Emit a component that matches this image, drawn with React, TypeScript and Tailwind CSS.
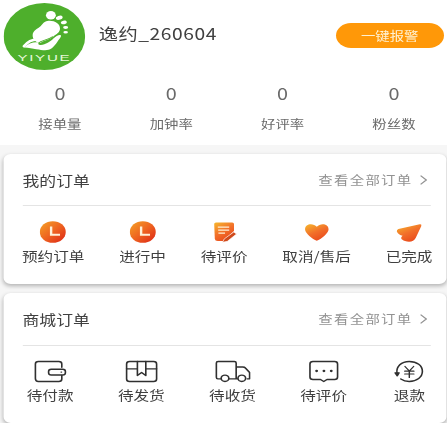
import type { ReactNode } from "react";

type Item = { label: string; icon: ReactNode };

const stats = ["接单量", "加钟率", "好评率", "粉丝数"];

function Gradients() {
  return (
    <svg className="absolute h-0 w-0" aria-hidden="true">
      <defs>
        <linearGradient id="warm" x1="0" y1="0" x2="1" y2="1">
          <stop offset="0" stopColor="#f5a326" />
          <stop offset="0.5" stopColor="#ee6420" />
          <stop offset="1" stopColor="#dc2416" />
        </linearGradient>
        <linearGradient id="soft" x1="0.1" y1="0" x2="0.7" y2="1">
          <stop offset="0" stopColor="#f6b22c" />
          <stop offset="0.5" stopColor="#f2702a" />
          <stop offset="1" stopColor="#e9481b" />
        </linearGradient>
      </defs>
    </svg>
  );
}

function Logo() {
  return (
    <svg viewBox="0 0 68 67" className="h-[67px] w-[68px] shrink-0">
      <ellipse cx="34" cy="33.5" rx="34" ry="33.5" fill="#4eaf2c" />
      <g fill="#fff">
        <ellipse cx="39.4" cy="12.2" rx="4.100" ry="4.300" />
        <ellipse cx="46.4" cy="14.8" rx="2.900" ry="2" transform="rotate(-25 46.4 14.8)" />
        <ellipse cx="50.200" cy="19.400" rx="2.500" ry="1.800" transform="rotate(-15 50.2 19.4)" />
        <ellipse cx="51.700" cy="24.500" rx="2.100" ry="1.400" />
        <ellipse cx="51.700" cy="29.300" rx="1.900" ry="1.200" />
        <path d="M36.500 18C42 17 47 20.500 47 25.500C47 29.500 44 31 41.500 33.500C38.500 36.500 33.500 37.500 30.500 40C27 39.500 24 36.500 24.200 32C24.500 27 28.500 26 31 23C33 20.500 33.500 18.500 36.500 18Z" />
        <path d="M17 43.200C20.500 38 24 36.500 28 36.500" fill="none" stroke="#fff" strokeWidth="2.400" strokeLinecap="round" />
        <path d="M17 44.500C21 40 25 38.800 29.500 39.500C28.500 41.200 29 42.200 31 42C35 41.700 39 38.500 41.500 35.500C43.500 33.300 46.500 31.300 47.600 32.300C48.500 33.300 46.800 35.500 45.500 37.500C43 42 41 45.500 37.500 46.800C33 48.300 27 45.500 17 44.500Z" />
      </g>
      <path d="M29 40.200C31.500 37.200 37 37.200 41 33.500" fill="none" stroke="#4eaf2c" strokeWidth="0.900" />
      <text x="11.500" y="57.600" textLength="45" lengthAdjust="spacingAndGlyphs" fill="#e5f8d8" className="font-['Liberation_Sans',sans-serif] text-[8.800px] tracking-[1px]">YIYUE</text>
    </svg>
  );
}

function ClockIcon() {
  return (
    <svg viewBox="0 0 22 22" className="h-[22px] w-[22px]">
      <circle cx="11" cy="11" r="10.800" fill="url(#warm)" />
      <path d="M9.600 5.500v8.200h7.400" fill="none" stroke="#fff0d8" strokeWidth="2" />
    </svg>
  );
}

function NoteIcon() {
  return (
    <svg viewBox="0 0 22 22" className="h-[22px] w-[22px]">
      <path d="M4 1.500h13.500q1.500 0 1.500 1.500v7L10.500 20H5.500Q3.200 20 3 17.500L2.500 3q0-1.500 1.500-1.500Z" fill="url(#soft)" />
      <path d="M5.500 6.200h9.500M5.800 9.200h9.200M6 12.200h5.500" stroke="#fff0d5" strokeWidth="1.200" />
      <path d="M18.800 11l2.300 2L13.500 20.300l-4 1 1.300-3.300Z" fill="#cf4a1c" stroke="#fff" strokeWidth="0.600" />
    </svg>
  );
}

function HeartIcon() {
  return (
    <svg viewBox="0 0 22 22" className="h-[22px] w-[22px]">
      <path d="M11 19.800C7.500 18 1.200 12.500 1.200 8.200C1.200 2.500 8 1.500 11 5.800C14 1.500 20.800 2.500 20.800 8.200C20.800 12.500 14.500 18 11 19.800Z" fill="url(#soft)" />
    </svg>
  );
}

function PlaneIcon() {
  return (
    <svg viewBox="0 0 22 22" className="h-[22px] w-[22px]">
      <path d="M2 8L19.800 3.300Q21.800 3 21 5.200L16.500 16.800C15 20.500 11.500 21.500 7.500 20C4 18.500 3.500 16.800 5.500 14.800C3.500 14.300 1.300 12.800 .7 10.500Q.5 8.500 2 8Z" fill="url(#soft)" />
    </svg>
  );
}

function LineIcon({ children }: { children: ReactNode }) {
  return (
    <svg viewBox="0 0 30 24" className="h-[24px] w-[30px]" fill="none" stroke="#303030" strokeWidth="1.350" strokeLinecap="round" strokeLinejoin="round">
      {children}
    </svg>
  );
}

const bookings: Item[] = [
  { label: "预约订单", icon: <ClockIcon /> },
  { label: "进行中", icon: <ClockIcon /> },
  { label: "待评价", icon: <NoteIcon /> },
  { label: "取消/售后", icon: <HeartIcon /> },
  { label: "已完成", icon: <PlaneIcon /> },
];

const mall: Item[] = [
  {
    label: "待付款",
    icon: (
      <LineIcon>
        <path d="M24.500 8.300V5q0-2.500-2.500-2.500H5Q2.500 2.500 2.500 5v14.500q0 3 2.500 3h17q2.500 0 2.500-2.500v-3.500" />
        <rect x="13.500" y="10.200" width="14" height="5.800" rx="2.200" />
        <path d="M24 13.100h.2" />
      </LineIcon>
    ),
  },
  {
    label: "待发货",
    icon: (
      <LineIcon>
        <rect x="2.500" y="2.500" width="25" height="20" rx="2.500" />
        <path d="M2.500 9.800h9M18.500 9.800h9M11.500 2.500v14l3.500-3 3.500 3v-14" />
      </LineIcon>
    ),
  },
  {
    label: "待收货",
    icon: (
      <LineIcon>
        <path d="M5 19.800H2.500q-1.200 0-1.200-1.500V4q0-1.500 1.500-1.500h13.500q1.500 0 1.500 1.500v15.800H12M17.800 8h5.500q1.500 0 2.200 1l3.500 4.500v6.300h-2M17.800 19.800h1" />
        <circle cx="8.500" cy="19.300" r="3.200" />
        <circle cx="22.500" cy="19.300" r="3.200" />
      </LineIcon>
    ),
  },
  {
    label: "待评价",
    icon: (
      <LineIcon>
        <path d="M5.800 2.500h18q2.500 0 2.500 2.500v13q0 2.500-2.500 2.500h-6.300l-2.700 2-2.700-2H5.800q-2.500 0-2.500-2.500V5q0-2.500 2.500-2.500Z" />
        <path d="M8.800 12h.1M14.900 12h.1M21 12h.1" strokeWidth="2.300" />
      </LineIcon>
    ),
  },
  {
    label: "退款",
    icon: (
      <LineIcon>
        <path d="M4.800 14C4 7.500 8.500 2.500 15 2.500C21.500 2.500 26 6.500 26 12.300S21.500 22.500 15 22.500Q11 22.500 8 20" />
        <path d="M3.300 13.800h3.300l-1.500 3Z" fill="#303030" />
        <path d="M11.500 7.500l3.600 4.500 3.600-4.500M11.300 12.200h7.600M11.300 15h7.600M15.100 12v6.500" strokeWidth="1.200" />
      </LineIcon>
    ),
  },
];

type CardProps = { title: string; items: Item[]; headClass: string; rowClass: string };

function OrderCard({ title, items, headClass, rowClass }: CardProps) {
  return (
    <section className="h-[130px] rounded-[6px] bg-white shadow-[0_2px_4px_rgba(0,0,0,0.28)]">
      <div className={headClass}>
        <h2 className="-ml-[0.500px] text-[14px] leading-5 text-[#404040]">{title}</h2>
        <button className="flex items-center pr-[3px] text-[12px] leading-5 tracking-[1.100px] text-[#929292]">
          查看全部订单
          <svg viewBox="0 0 6 10" className="ml-[6.500px] h-[10px] w-[6px]" fill="none" stroke="#929292" strokeWidth="1.100">
            <path d="M.5 .7L5.300 5L.5 9.300" />
          </svg>
        </button>
      </div>
      <div className={rowClass}>
        {items.map((item) => (
          <div key={item.label} className="flex flex-col items-center">
            <div className="flex h-[24px] items-center">{item.icon}</div>
            <span className="mt-[3px] text-[13px] leading-[18px] whitespace-nowrap text-[#404040]">{item.label}</span>
          </div>
        ))}
      </div>
    </section>
  );
}

export default function App() {
  return (
    <div className="h-[423px] w-[447px] overflow-hidden bg-[#f6f6f6]">
      <main className="relative h-[423px] w-[372.500px] origin-top-left scale-x-[1.2] font-['Noto_Sans_CJK_SC',sans-serif]">
        <Gradients />
        <header className="h-[145px] bg-white pt-[3px]">
          <div className="flex h-[67px] items-start pr-[3px] pl-[3.200px]">
            <Logo />
            <h1 className="mt-[18px] ml-[11px] text-[16px] leading-6 tracking-[0.500px] text-[#404040]">逸约_260604</h1>
            <button className="mt-[20px] ml-auto h-[25px] w-[89.500px] rounded-full bg-[#ff9808] text-[12px] leading-[24px] text-[#fff3d6]">一键报警</button>
          </div>
          <div className="ml-[3.500px] flex w-[371px] pt-[11px] text-[#6a6a6a]">
            {stats.map((label) => (
              <div key={label} className="flex w-[92.800px] shrink-0 flex-col items-center">
                <span className="text-[16.500px] leading-6">0</span>
                <span className="mt-[10px] text-[12px] leading-[18px]">{label}</span>
              </div>
            ))}
          </div>
        </header>
        <div className="flex flex-col gap-[9px] pt-[9px] pr-[0.700px] pl-[3.300px]">
          <OrderCard
            title="我的订单"
            items={bookings}
            headClass="mr-[12.500px] ml-[16px] flex h-[52px] items-center justify-between border-b border-[#e4e4e4]"
            rowClass="mr-[11.400px] ml-[15px] flex justify-between pt-[14px]"
          />
          <OrderCard
            title="商城订单"
            items={mall}
            headClass="mr-[12.500px] ml-[16px] flex h-[53px] items-center justify-between border-b border-[#e4e4e4]"
            rowClass="mr-[15.600px] ml-[19px] flex justify-between pt-[13px]"
          />
        </div>
      </main>
    </div>
  );
}
